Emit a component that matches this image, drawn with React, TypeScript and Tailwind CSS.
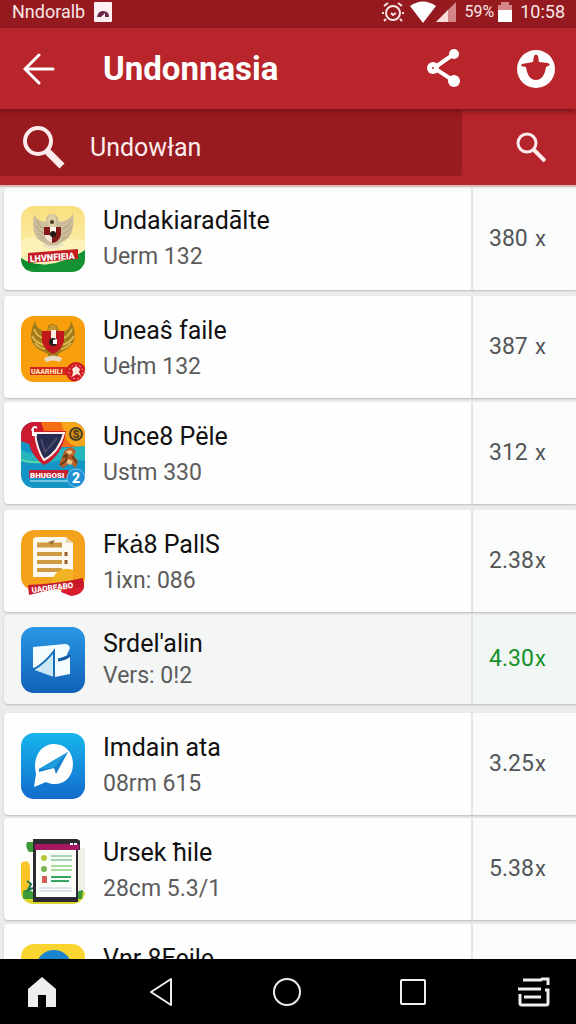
import type { ReactNode } from "react";

type App = {
  name: string;
  info: string;
  value: string;
  icon: ReactNode;
  gap: string;
  active?: boolean;
};

// Moldura comum dos ícones (64x66 com cantos arredondados)
function Tile({ id, children }: { id: string; children: ReactNode }) {
  return (
    <svg viewBox="0 0 64 66" className="h-[66px] w-16 shrink-0" aria-hidden="true">
      <clipPath id={id}>
        <rect width="64" height="66" rx="13" />
      </clipPath>
      <g clipPath={`url(#${id})`}>{children}</g>
    </svg>
  );
}

function GarudaPale() {
  return (
    <Tile id="garuda-pale">
      <defs>
        <linearGradient id="sky" x1="0" y1="0" x2="0" y2="1">
          <stop offset="0" stopColor="#f9df7c" />
          <stop offset="1" stopColor="#fdf6c4" />
        </linearGradient>
      </defs>
      <rect width="64" height="66" fill="url(#sky)" />
      <path d="M0 36q8-7 16-3t14 0 16-1 18 2v14H0z" fill="#fdf3b8" />
      <path d="M0 59Q38 62 64 44v22H0z" fill="#149234" />
      <path d="M0 52q10 7 24 6L0 66z" fill="#0b8a2c" />
      <path d="M13 8q3 7 12 8 0-8 6-8t7 8q10-1 14-8 3 24-13 29l-3 5H27l-4-5Q9 32 13 8z" fill="#cbbd9b" />
      <path d="M16 15q2 6 8 8M15 20q3 6 9 8M17 27q3 5 8 6M50 15q-3 6-8 8M51 20q-3 6-9 8M49 27q-3 5-8 6" stroke="#b3a27b" fill="none" />
      <path d="M27 12q4-7 8 0l-1 9h-6z" fill="#ddd0a9" />
      <circle cx="31" cy="16" r="2" fill="#4b3821" />
      <path d="M23 21h17v8q-2 7-9 8-7-2-8-8z" fill="#84191b" />
      <path d="M29 21h6v7h-6z" fill="#fff7eb" />
      <path d="M23 29h8v8q-7-2-8-8z" fill="#efe5d5" />
      <circle cx="32" cy="28" r="3" fill="#211a18" />
      <path d="M22 39q10 5 20-1" stroke="#ece4c8" strokeWidth="3" fill="none" />
      <path d="M7 47l50-4v10L7 57z" fill="#c51c24" />
      <text x="9" y="56" transform="rotate(-4 9 56)" fontSize="9" fontWeight="900" fill="#fff">LHVNFIEIA</text>
    </Tile>
  );
}

function GarudaGold() {
  return (
    <Tile id="garuda-gold">
      <rect width="64" height="66" fill="#f99e0d" />
      <path d="M14 5Q4 26 19 34l8 4v6h10v-6l7-4Q60 26 50 5q0 9-11 12l-3-7q-5-4-9 0l-1 6Q15 14 14 5z" fill="#a17a19" />
      <path d="M13 13q3 8 11 10M11 20q4 7 12 9M14 27q4 5 10 6M51 13q-3 8-11 10M53 20q-4 7-12 9M50 27q-4 5-10 6" stroke="#ddb94d" strokeWidth="2" fill="none" />
      <path d="M27 13q4-8 9-1l-2 5h-6z" fill="#c7962c" />
      <path d="M21 15h22v10q-2 9-11 13-9-4-11-13z" fill="#bf191d" />
      <path d="M30 14h5v9h-5z" fill="#f9eee1" />
      <circle cx="32" cy="26" r="4" fill="#221d1b" />
      <path d="M32 24l4-1v5h-4z" fill="#fff" />
      <path d="M23 42q9-5 18 0l-2 4q-7-3-14 0z" fill="#e8dac3" />
      <rect x="9" y="51" width="39" height="8" fill="#d42620" />
      <text x="10" y="58" fontSize="7" fontWeight="900" fill="#ffe8a9">UAARHILI</text>
      <circle cx="55" cy="56" r="10" fill="#cf1820" />
      <circle cx="55" cy="56" r="7" fill="none" stroke="#f09a91" strokeDasharray="2 2" />
      <path d="M51 53l4-3 4 3-1 3 2 4-4-2-5 3 1-5z" fill="#ffe5dc" />
    </Tile>
  );
}

function ShieldGame() {
  return (
    <Tile id="shield-game">
      <rect width="64" height="66" fill="#1595c5" />
      <path d="M20 0h44v25H20z" fill="#f46d15" />
      <path d="M40 0h24v24q-18 3-21-14z" fill="#f7a51b" />
      <path d="M0 28q15 7 29 2t35-6v15q-21-3-34 1T0 38z" fill="#25b6bd" />
      <path d="M0 38q15 5 30-1" stroke="#58d5a7" strokeWidth="2" fill="none" />
      <path d="M0 0h20l3 9h22q-4 26-22 34Q12 36 8 22L0 19z" fill="#cc1b2e" />
      <path d="M14 11h29q-5 19-20 27-7-10-9-27z" fill="#252c50" stroke="#fff0ed" strokeWidth="2" />
      <path d="M20 17l4 13 12-14" fill="none" stroke="#4b4968" strokeWidth="2" />
      <path d="M11 9q1-6 5-3M12 7v6h4" stroke="#fff" strokeWidth="2" fill="none" />
      <circle cx="55" cy="12" r="6" fill="#d88c16" stroke="#4c4226" strokeWidth="2" />
      <text x="52" y="16" fontSize="10" fontWeight="700" fill="#3a331f">S</text>
      <path d="M44 28l6-3 5 4-2 5 4 5-2 7-6-5-7 5-4-3 3-8z" fill="#b85e26" />
      <path d="M45 29l5-1 2 3-5 2zM47 37l5 2-2 4-5-2z" fill="#edc584" />
      <path d="M42 35l4-2-1 6-6 4M51 34l5 7" stroke="#62401d" strokeWidth="2" fill="none" />
      <rect x="8" y="48" width="39" height="8" fill="#c62234" />
      <text x="9" y="56" fontSize="8" fontWeight="900" fill="#fff">BHUGOSI</text>
      <path d="M9 59h38" stroke="#d5f3fa" />
      <circle cx="55" cy="56" r="9" fill="#238fd3" stroke="#71c9ee" />
      <text x="51" y="61" fontSize="14" fontWeight="900" fill="#fff">2</text>
    </Tile>
  );
}

function Document() {
  return (
    <Tile id="document">
      <rect width="64" height="60" rx="13" fill="#f4a21b" />
      <path d="M12 11q0-4 4-4h29l7 6v34H12z" fill="#fffaf1" />
      <path d="M45 7v6h7" fill="#ead5ac" />
      <path d="M16 15h25" stroke="#cf9b42" strokeWidth="5" />
      <path d="M16 24h25M16 32h25M16 40h25" stroke="#cf9b42" strokeWidth="4" />
      <path d="M27 12l7-2-3 5" fill="#9b713b" />
      <path d="M45 22v4M45 30v4" stroke="#9b5824" strokeWidth="3" />
      <path d="M32 49q5-14 20-9v18H32z" fill="#efb323" />
      <path d="M42 54l21-3v8q-4 7-13 7l-10-4z" fill="#d91d2e" />
      <path d="M7 55q27-1 55-7v9q-28 1-54 8z" fill="#c61a2b" />
      <text x="11" y="63" transform="rotate(-7 11 63)" fontSize="8" fontWeight="900" fill="#fff">UAOBEABO</text>
    </Tile>
  );
}

function BlueMap() {
  return (
    <Tile id="blue-map">
      <defs>
        <linearGradient id="blue" x1="0" y1="0" x2="0" y2="1">
          <stop stopColor="#2997e5" />
          <stop offset="1" stopColor="#1161b7" />
        </linearGradient>
      </defs>
      <rect width="64" height="66" fill="url(#blue)" />
      <path d="M12 20l32-3q4 0 5 4l-3 6 3 3v17l-15 3-20-7 1-3-3 1z" fill="#f4fcff" />
      <path d="M14 43l19-18v25z" fill="#cbe8f7" />
      <path d="M12 43Q25 35 33 24v27" stroke="#176fb8" strokeWidth="2" fill="none" />
      <path d="M37 33q7-1 12-5" stroke="#145da8" strokeWidth="3" fill="none" />
    </Tile>
  );
}

function Messenger() {
  return (
    <Tile id="messenger">
      <defs>
        <linearGradient id="cyan" x1="0" y1="0" x2="0" y2="1">
          <stop stopColor="#17b5ec" />
          <stop offset="1" stopColor="#126bcd" />
        </linearGradient>
      </defs>
      <rect width="64" height="66" fill="url(#cyan)" />
      <path d="M15 41C11 24 20 11 33 11c12 0 19 9 19 20 0 17-15 24-27 18l-12 5z" fill="#fff" />
      <path d="M18 36l29-17-12 22-2-6-15 4z" fill="#1781cf" />
      <path d="M18 36l29-17-14 16z" fill="#1d9ddd" />
    </Tile>
  );
}

function Tablet() {
  return (
    <Tile id="tablet">
      <rect x="52" y="10" width="12" height="56" fill="#edf1e5" />
      <path d="M0 25q8-5 9 4v37H0z" fill="#fbc52a" />
      <path d="M0 54h64v12H0z" fill="#d9d62a" />
      <path d="M6 4h8v10H8q-4-5-2-10zM2 53q5-4 11 2v6H2zM54 54l8-2-1 9h-6z" fill="#3b9939" />
      <path d="M6 43l4 3-3 6 5-2" stroke="#1d7355" strokeWidth="2" fill="none" />
      <path d="M12 1h47v11h-2v52H12z" fill="#2e2a31" />
      <path d="M14 6h44v6H14z" fill="#a61862" />
      <path d="M15 12h40v47H15z" fill="#fbfff9" />
      <path d="M49 6h3M53 6h3" stroke="#fff" strokeWidth="2" />
      <path d="M30 18h21M30 22h21" stroke="#51a869" />
      <path d="M30 28h21M30 32h21" stroke="#a9dc9d" strokeWidth="2" />
      <path d="M30 39h20M30 43h18" stroke="#36a662" strokeWidth="2" />
      <circle cx="23" cy="20" r="3" fill="#b8c739" />
      <circle cx="23" cy="31" r="3" fill="#7cb650" />
      <rect x="21" y="38" width="5" height="7" fill="#d45d58" />
      <path d="M18 50h15M34 50h16M18 53h33" stroke="#b9c8d4" />
    </Tile>
  );
}

function YellowCircle() {
  return (
    <Tile id="yellow-circle">
      <rect width="64" height="66" fill="#fbd52f" />
      <circle cx="33" cy="24" r="18" fill="#1b84ce" />
      <circle cx="33" cy="25" r="10" fill="#d9edf4" />
    </Tile>
  );
}

const apps: App[] = [
  { name: "Undakiaradālte", info: "Uerm 132", value: "380", icon: <GarudaPale />, gap: "mb-1.5 pb-1" },
  { name: "Uneaŝ faile", info: "Uełm 132", value: "387", icon: <GarudaGold />, gap: "mb-1" },
  { name: "Unce8 Pële", info: "Ustm 330", value: "312", icon: <ShieldGame />, gap: "mb-1.5" },
  { name: "Fkȧ8 PallS", info: "1ixn: 086", value: "2.38", icon: <Document />, gap: "mb-[3px]" },
  { name: "Srdel'alin", info: "Vers: 0!2", value: "4.30", icon: <BlueMap />, gap: "mb-[9px]", active: true },
  { name: "Imdain ata", info: "08rm 615", value: "3.25", icon: <Messenger />, gap: "mb-[3px]" },
  { name: "Ursek ħile", info: "28cm 5.3/1", value: "5.38", icon: <Tablet />, gap: "mb-1" },
  { name: "Vnr 8Eeile", info: "", value: "", icon: <YellowCircle />, gap: "" },
];

function Row({ app }: { app: App }) {
  return (
    <li
      className={`flex shrink-0 overflow-hidden rounded-l shadow-[0_1px_2px_#bbb] ${
        app.active ? "h-[89px] bg-[#f3f6f5]" : "h-[102px] bg-[#fefefe]"
      } ${app.gap.replace(" pb-1", "")}`}
    >
      <div className={`flex min-w-0 flex-1 items-center pl-[17px] ${app.active || app.gap.includes("pb-1") ? "" : "pt-1"}`}>
        {app.icon}
        <div className="ml-[18px] min-w-0 whitespace-nowrap">
          <h2 className={`text-[25px] text-[#111] ${app.active ? "leading-8" : "leading-9"}`}>{app.name}</h2>
          <p className={`text-[23px] text-[#5c5c5c] ${app.active ? "h-8 leading-8" : "h-9 leading-9"}`}>{app.info}</p>
        </div>
      </div>
      <div
        className={`flex w-[105px] items-center border-l-2 border-[#e4e4e6] pl-4 ${
          app.active ? "bg-[#f0f6f3] text-[#14912b]" : "bg-[#fafcfc] text-[#555]"
        }`}
      >
        {app.value && (
          <p className="flex w-[57px] items-baseline justify-between text-[23px]">
            <span>{app.value}</span>
            <span className="text-[22px]">x</span>
          </p>
        )}
      </div>
    </li>
  );
}

export default function App() {
  return (
    <div className="flex h-screen flex-col overflow-hidden bg-[#ebebec] font-[Roboto,sans-serif]">
      {/* Barra de status */}
      <div className="flex h-7 shrink-0 items-center bg-[#941a20] pl-3 pr-[11px] text-[#f8e6e6]">
        <span className="pb-1 text-lg leading-6">Nndoralb</span>
        <svg viewBox="0 0 18 20" className="mb-1 ml-[9px] h-5 w-[18px]" aria-hidden="true">
          <rect width="18" height="20" rx="1" fill="#fff0f4" />
          <path d="M3 15q1-6 6-6 6 0 6 6h-4V11l-4 4z" fill="#692346" />
        </svg>
        <div className="ml-auto flex items-center pb-1">
          <svg viewBox="0 0 22 22" className="h-[22px] w-[22px]" fill="none" stroke="currentColor" strokeWidth="2" aria-hidden="true">
            <circle cx="11" cy="12" r="7" />
            <path d="M2 5l4-3M16 2l4 3M4 18l-2 2M18 18l2 2M2 12H0M22 12h-2M9 12l2 2 3-2" />
          </svg>
          <svg viewBox="0 0 26 22" className="ml-1.5 h-[22px] w-[26px]" aria-hidden="true">
            <path d="M0 5Q13-4 26 5L13 22z" fill="#fff" />
          </svg>
          <svg viewBox="0 0 20 20" className="h-5 w-5" aria-hidden="true">
            <path d="M0 20L20 0v20z" fill="#d48588" />
            <path d="M0 20L12 8v12z" fill="#f8dada" />
          </svg>
          <span className="ml-2 text-base leading-6">59%</span>
          <svg viewBox="0 0 14 20" className="ml-1 h-5 w-3.5" aria-hidden="true">
            <path d="M3 0h8v3h3v17H0V3h3z" fill="#d48588" />
            <path d="M0 8h14v12H0z" fill="#fff" />
          </svg>
          <span className="ml-2 text-lg leading-6">10:58</span>
        </div>
      </div>

      {/* Cabeçalho */}
      <header className="z-10 flex h-[81px] shrink-0 items-center bg-[#b8252b] pl-[23px] pr-5 text-white shadow-[0_2px_5px_#6c1015]">
        <button aria-label="Back">
          <svg viewBox="0 0 32 32" className="h-8 w-8" fill="none" stroke="currentColor" strokeWidth="3" strokeLinecap="round" aria-hidden="true">
            <path d="M30 16H3M16 2L2 16l14 14" />
          </svg>
        </button>
        <h1 className="ml-12 flex-1 text-[33px] font-bold leading-10">Undonnasia</h1>
        <button aria-label="Share">
          <svg viewBox="0 0 34 40" className="h-10 w-[34px]" aria-hidden="true">
            <path d="M27 5L7 19l20 13" fill="none" stroke="currentColor" strokeWidth="4" />
            <g fill="currentColor">
              <circle cx="27" cy="5" r="5" />
              <circle cx="6" cy="19" r="6" />
              <circle cx="27" cy="32" r="6" />
            </g>
            <circle cx="6" cy="19" r="1" fill="#b8252b" />
          </svg>
        </button>
        <button aria-label="Profile" className="ml-[55px]">
          <svg viewBox="0 0 40 40" className="h-10 w-10" aria-hidden="true">
            <circle cx="20" cy="20" r="19" fill="#fff" />
            <path d="M5 17l1-2 11-2 1-6q2-3 4 0l1 6 9 1 2 2-4 2c-1 7-4 13-10 13S11 25 10 18z" fill="#b8252b" />
          </svg>
        </button>
      </header>

      {/* Busca */}
      <form className="flex h-[78px] shrink-0 border-b-2 border-[#d9b9bb] bg-[#b4242a]" onSubmit={(e) => e.preventDefault()}>
        <label className="mb-[9px] flex min-w-0 flex-1 items-center rounded-br bg-[#981b20] pl-[23px] pt-2.5 text-[#fdecec]">
          <svg viewBox="0 0 42 44" className="h-11 w-[42px] shrink-0" fill="none" stroke="currentColor" aria-hidden="true">
            <circle cx="15" cy="15" r="13" strokeWidth="4" />
            <path d="M24 25l15 15" strokeWidth="7" />
          </svg>
          <input
            type="text"
            aria-label="Search"
            defaultValue="Undowłan"
            className="ml-[25px] w-full min-w-0 bg-transparent text-[25px] leading-8 outline-none"
          />
        </label>
        <button aria-label="Search" className="w-[114px] pl-[54px] text-[#fdecec]">
          <svg viewBox="0 0 30 30" className="h-[30px] w-[30px]" fill="none" stroke="currentColor" strokeWidth="3" aria-hidden="true">
            <circle cx="11" cy="11" r="9" />
            <path d="M18 18l11 11" strokeWidth="4" />
          </svg>
        </button>
      </form>

      {/* Lista */}
      <main className="min-h-0 flex-1 overflow-hidden pl-1 pt-px">
        <ul>
          {apps.map((app) => (
            <Row key={app.name} app={app} />
          ))}
        </ul>
      </main>

      {/* Navegação do sistema */}
      <nav className="z-10 flex h-[65px] shrink-0 items-center justify-between bg-black pl-[27px] pr-[26px] text-[#eee]">
        <button aria-label="Home">
          <svg viewBox="0 0 30 32" className="h-8 w-[30px]" aria-hidden="true">
            <path d="M1 13L15 1l14 12v18H19V19h-8v12H1z" fill="currentColor" />
          </svg>
        </button>
        <button aria-label="Previous" className="mr-2">
          <svg viewBox="0 0 24 30" className="h-[30px] w-6" fill="none" stroke="currentColor" strokeWidth="2" strokeLinejoin="round" aria-hidden="true">
            <path d="M22 2v26L2 15z" />
          </svg>
        </button>
        <button aria-label="Main">
          <svg viewBox="0 0 28 28" className="h-7 w-7" fill="none" stroke="currentColor" strokeWidth="2" aria-hidden="true">
            <circle cx="14" cy="14" r="13" />
          </svg>
        </button>
        <button aria-label="Recent" className="ml-2">
          <svg viewBox="0 0 26 26" className="h-[26px] w-[26px]" fill="none" stroke="currentColor" strokeWidth="2" aria-hidden="true">
            <rect x="1" y="1" width="24" height="24" rx="1" />
          </svg>
        </button>
        <button aria-label="Menu">
          <svg viewBox="0 0 32 30" className="h-[30px] w-8" fill="none" stroke="currentColor" strokeWidth="3" aria-hidden="true">
            <path d="M5 3h18l1-1h6v6M0 12h23M6 20h17M2 17v9q0 2 2 2h24q2 0 2-2V13h-3" />
          </svg>
        </button>
      </nav>
    </div>
  );
}
